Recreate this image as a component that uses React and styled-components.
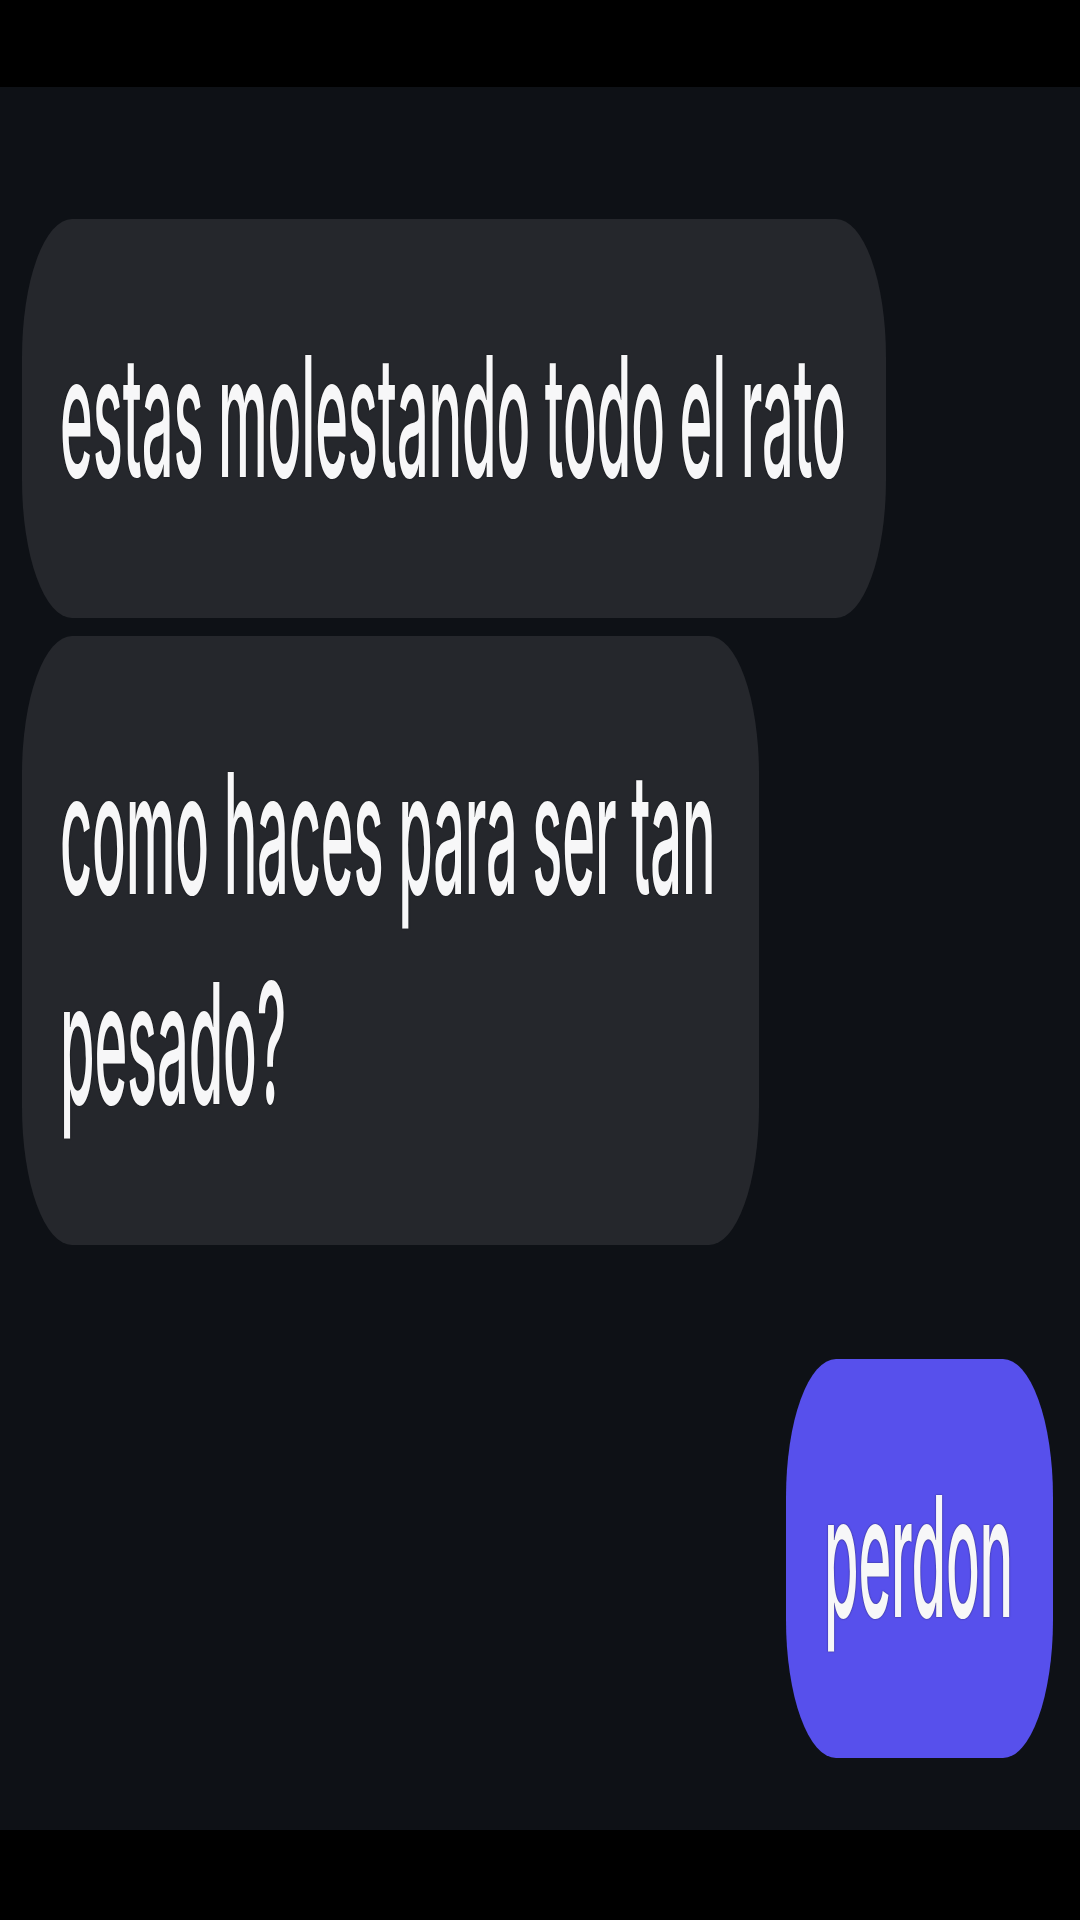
import React from "react";
import styled, { createGlobalStyle } from "styled-components";

// the screenshot is a phone capture stretched 3x vertically,
// so the chat is laid out at 1/3 height and scaled back up
const STRETCH = 3;

const GlobalStyle = createGlobalStyle`
  html, body {
    margin: 0;
    padding: 0;
    background: #000;
  }
  #root {
    width: 1080px;
    height: 1920px;
  }
`;

const Screen = styled.div`
  width: 1080px;
  height: 1920px;
  overflow: hidden;
  background: #000;
`;

const Stretch = styled.div`
  width: 1080px;
  height: ${1920 / STRETCH}px;
  display: flex;
  flex-direction: column;
  transform: scaleY(${STRETCH});
  transform-origin: top left;
`;

const Bar = styled.div`
  flex: 0 0 ${(p) => p.$h}px;
  background: #000;
`;

const Chat = styled.div`
  flex: 1;
  display: flex;
  flex-direction: column;
  background: #0e1116;
  padding: 43.3px 27px 0 22px;
  font-family: Inter, "Noto Sans", sans-serif;
`;

const Group = styled.div`
  display: flex;
  flex-direction: column;
  align-items: ${(p) => (p.$mine ? "flex-end" : "flex-start")};
  gap: 6.67px;
  margin-top: ${(p) => p.$gap || 0}px;
`;

const Bubble = styled.div`
  box-sizing: border-box;
  width: fit-content;
  max-width: ${(p) => p.$max || 1000}px;
  padding: 31px 40px 32px 38px;
  border-radius: 50px / 46px;
  background: ${(p) => (p.$mine ? "#5750ec" : "#25272c")};
  color: #f7f7f8;
  font-size: 56px;
  font-weight: 500;
  line-height: 70px;
  letter-spacing: -0.2px;
  text-shadow: 0 0 1px rgba(0, 0, 0, 0.6);
`;

const messages = [
  { id: 1, text: "estas molestando todo el rato" },
  { id: 2, text: "como haces para ser tan pesado?", max: 737 },
];

export default function App() {
  return (
    <Screen>
      <GlobalStyle />
      <Stretch>
        <Bar $h={29.33} />
        <Chat>
          <Group>
            {messages.map((m) => (
              <Bubble key={m.id} $max={m.max}>
                {m.text}
              </Bubble>
            ))}
          </Group>
          <Group $mine $gap={37.67}>
            <Bubble $mine>perdon</Bubble>
          </Group>
        </Chat>
        <Bar $h={29.67} />
      </Stretch>
    </Screen>
  );
}
